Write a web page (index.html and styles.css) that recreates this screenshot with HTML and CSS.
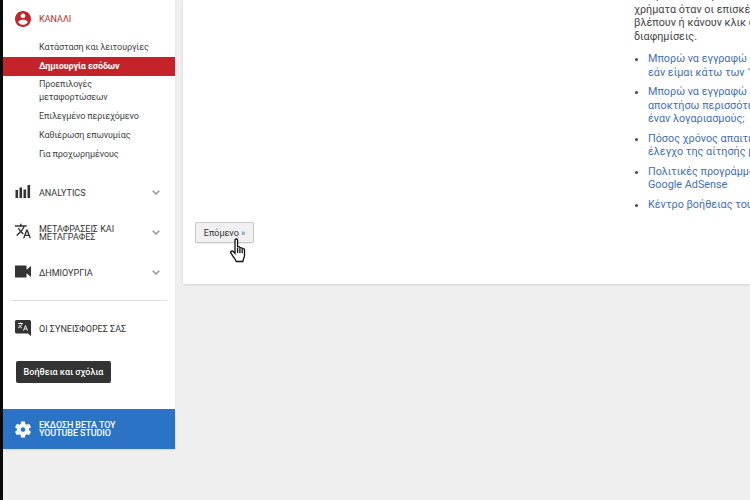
FILE: index.html
```html
<!DOCTYPE html>
<html lang="el">
<head>
  <meta charset="UTF-8">
  <title>Δημιουργία εσόδων</title>
  <link rel="stylesheet" href="styles.css">
</head>
<body>
  <div class="page">
    <nav class="sidebar">
      <div class="nav-row channel">
        <svg class="nav-icon icon-channel" viewBox="2 2 20 20"><path d="M12 2C6.48 2 2 6.48 2 12s4.48 10 10 10 10-4.48 10-10S17.52 2 12 2zm0 3c1.66 0 3 1.34 3 3s-1.34 3-3 3-3-1.34-3-3 1.34-3 3-3zm0 14.2c-2.5 0-4.71-1.28-6-3.22.03-1.99 4-3.08 6-3.08 1.99 0 5.97 1.09 6 3.08-1.29 1.94-3.5 3.22-6 3.22z"/></svg>
        <span class="nav-label">ΚΑΝΑΛΙ</span>
      </div>
      <ul class="subnav">
        <li>Κατάσταση και λειτουργίες</li>
        <li class="active">Δημιουργία εσόδων</li>
        <li class="two-line">Προεπιλογές<br>μεταφορτώσεων</li>
        <li>Επιλεγμένο περιεχόμενο</li>
        <li>Καθιέρωση επωνυμίας</li>
        <li>Για προχωρημένους</li>
      </ul>

      <div class="nav-row section">
        <svg class="nav-icon" viewBox="0 0 15 13"><path d="M0 5h2.6v8H0zM4 2.5h2.6V13H4zM8 4.500h2.600V13H8zM12 0h2.600v13H12z"/></svg>
        <span class="nav-label">ANALYTICS</span>
        <svg class="chevron" viewBox="0 0 8 5"><path d="M.7.7L4 4l3.300-3.300"/></svg>
      </div>
      <div class="nav-row section">
        <svg class="nav-icon icon-translate" viewBox="1 2 22 20"><path d="M12.87 15.07l-2.54-2.51.03-.03c1.74-1.94 2.98-4.17 3.71-6.53H17V4h-7V2H8v2H1v1.99h11.17C11.5 7.92 10.44 9.75 9 11.35 8.07 10.32 7.3 9.19 6.69 8h-2c.73 1.63 1.73 3.17 2.98 4.56l-5.09 5.02L4 19l5-5 3.11 3.11.76-2.04zM18.5 10h-2L12 22h2l1.12-3h4.75L21 22h2l-4.5-12zm-2.62 7l1.62-4.33L19.12 17h-3.24z"/></svg>
        <span class="nav-label tight">ΜΕΤΑΦΡΑΣΕΙΣ ΚΑΙ<br>ΜΕΤΑΓΡΑΦΕΣ</span>
        <svg class="chevron" viewBox="0 0 8 5"><path d="M.7.7L4 4l3.300-3.300"/></svg>
      </div>
      <div class="nav-row section">
        <svg class="nav-icon" viewBox="0 0 16 12"><path d="M0 0h11.500v4.300L16 .5v11l-4.500-3.800V12H0z"/></svg>
        <span class="nav-label">ΔΗΜΙΟΥΡΓΙΑ</span>
        <svg class="chevron" viewBox="0 0 8 5"><path d="M.7.7L4 4l3.300-3.300"/></svg>
      </div>

      <hr class="divider">

      <div class="nav-row section">
        <svg class="nav-icon icon-contrib" viewBox="0 0 16 16">
          <path d="M1.500 0h13A1.500 1.500 0 0 1 16 1.500v14.500l-3-2.500H1.500A1.500 1.500 0 0 1 0 12V1.500A1.500 1.500 0 0 1 1.500 0z"/>
          <path class="contrib-glyph" d="M3 3.500h5M5.500 2.500v1M7 3.500c-.5 2-2 3.500-4 4.500M4 5c.6 1.200 1.500 2.200 3 3M8.500 10.500l2-5 2 5M9.300 9h2.400"/>
        </svg>
        <span class="nav-label">ΟΙ ΣΥΝΕΙΣΦΟΡΕΣ ΣΑΣ</span>
      </div>

      <button class="help-btn">Βοήθεια και σχόλια</button>

      <div class="beta">
        <svg class="beta-icon" viewBox="2.500 2 19 20"><path d="M19.140 12.940c.04-.3.06-.61.06-.94 0-.32-.02-.64-.07-.94l2.030-1.580c.18-.14.23-.41.12-.61l-1.920-3.320c-.12-.22-.37-.29-.59-.22l-2.390.96c-.5-.38-1.030-.7-1.620-.94l-.36-2.540c-.04-.24-.24-.41-.48-.41h-3.840c-.24 0-.43.17-.47.41l-.36 2.540c-.59.24-1.130.57-1.620.94l-2.390-.96c-.22-.08-.47 0-.59.22L2.740 8.870c-.12.21-.08.47.12.61l2.030 1.580c-.05.3-.09.63-.09.94s.02.64.07.94l-2.030 1.580c-.18.14-.23.41-.12.61l1.920 3.320c.12.22.37.29.59.22l2.390-.96c.5.38 1.030.7 1.620.94l.36 2.540c.05.24.24.41.48.41h3.840c.24 0 .44-.17.47-.41l.36-2.540c.59-.24 1.130-.56 1.620-.94l2.390.96c.22.08.47 0 .59-.22l1.920-3.320c.12-.22.07-.47-.12-.61l-2.010-1.580zM12 14.800c-1.540 0-2.800-1.260-2.800-2.800s1.260-2.800 2.800-2.800 2.800 1.260 2.800 2.800-1.260 2.800-2.800 2.800z"/></svg>
        <span class="beta-label">ΕΚΔΟΣΗ ΒΕΤΑ ΤΟΥ<br>YOUTUBE STUDIO</span>
      </div>
    </nav>

    <main class="content">
      <section class="card">
        <div class="help-text">
          <p>Μπορείτε να κερδίσετε χρήματα από τα</p>
          <p>χρήματα όταν οι επισκέπτες του καναλιού</p>
          <p>βλέπουν ή κάνουν κλικ στις</p>
          <p class="last">διαφημίσεις.</p>
          <ul class="help-links">
            <li>Μπορώ να εγγραφώ στο πρόγραμμα<br>εάν είμαι κάτω των 18 ετών;</li>
            <li>Μπορώ να εγγραφώ γρήγορα και να<br>αποκτήσω περισσότερα από<br>έναν λογαριασμούς;</li>
            <li>Πόσος χρόνος απαιτείται για τον<br>έλεγχο της αίτησής μου;</li>
            <li>Πολιτικές προγράμματος του<br>Google AdSense</li>
            <li>Κέντρο βοήθειας του AdSense</li>
          </ul>
        </div>
        <button class="next-btn">Επόμενο <span class="next-arrows">»</span></button>
        <svg class="hand-cursor" viewBox="0 0 18 25">
          <path d="M5 2.200c0-1.600 2.600-1.600 2.600 0v7.300c0-1.300 2.300-1.300 2.300 0v1c0-1.300 2.300-1.300 2.300 0v1c0-1.200 2.300-1.200 2.300.2v5.600c0 2.500-1.200 3.200-1.600 6.200H6.200c-.5-2-1.500-3-2.700-4.500L1 15.200c-1-1.300.8-3 2.300-1.700L5 15.300z"/>
          <path class="hand-lines" d="M7.600 10v5M9.900 10.500v4.500M12.200 11.500v3.500"/>
        </svg>
      </section>
    </main>
  </div>
</body>
</html>
```

FILE: styles.css
```css
* {
  box-sizing: border-box;
}
html, body {
  margin: 0;
  height: 100%;
  overflow: hidden;
}
body {
  font-family: Roboto, "Noto Sans", sans-serif;
  font-size: 9px;
  background-color: #efefef;
  color: #333333;
}
.page {
  display: flex;
  align-items: flex-start;
  height: 500px;
  border-left: 3px solid #0a0a0a;
}

/* sidebar */
.sidebar {
  width: 172px;
  flex: none;
  padding-top: 9px;
  background-color: #ffffff;
  box-shadow: 0 1px 2px rgba(0, 0, 0, 0.1);
}
.nav-row {
  display: flex;
  align-items: center;
  padding: 0 15px 0 12px;
}
.channel {
  height: 20px;
  margin-bottom: 9px;
  color: #c5232a;
}
.section {
  height: 40px;
}
.section .nav-label {
  padding-top: 2px;
}
.nav-icon {
  width: 16px;
  height: 13px;
  margin-top: -2px;
  margin-right: 8px;
  flex: none;
  fill: #333333;
}
.icon-channel {
  height: 16px;
  margin-top: 0;
  fill: #c5232a;
}
.icon-translate {
  height: 16px;
}
.icon-contrib {
  height: 16px;
  margin-top: 0;
}
.contrib-glyph {
  fill: none;
  stroke: #ffffff;
  stroke-width: 0.9;
}
.nav-label {
  flex: 1;
  line-height: 13px;
}
.nav-label.tight {
  line-height: 8px;
}
.chevron {
  width: 8px;
  height: 5px;
  fill: none;
  stroke: #999999;
  stroke-width: 1.6;
}
.subnav {
  list-style: none;
  margin: 0 0 8px;
  padding: 0;
  letter-spacing: -0.1px;
}
.subnav li {
  height: 19px;
  padding-left: 36px;
  line-height: 19px;
  color: #444444;
}
.subnav li.active {
  background-color: #c5232a;
  color: #ffffff;
  font-weight: 700;
}
.subnav li.two-line {
  height: 31px;
  padding-top: 2px;
  line-height: 13px;
}
.divider {
  height: 1px;
  margin: 8px 8px 7px;
  border: none;
  background-color: #e0e0e0;
}
.help-btn {
  display: block;
  width: 95px;
  height: 22px;
  margin: 13px 0 0 13px;
  padding: 0;
  border: none;
  border-radius: 2px;
  background-color: #333333;
  color: #ffffff;
  font: 500 9px Roboto, sans-serif;
}
.beta {
  display: flex;
  align-items: center;
  height: 40px;
  margin-top: 26px;
  padding-left: 12px;
  background-color: #2b73c4;
  color: #ffffff;
}
.beta-icon {
  width: 16px;
  height: 17px;
  margin-right: 8px;
  fill: #ffffff;
}
.beta-label {
  font-weight: 500;
  line-height: 8px;
  letter-spacing: -0.1px;
}

/* main card */
.content {
  flex: 1;
  min-width: 0;
  padding-left: 8px;
}
.card {
  position: relative;
  height: 284px;
  padding: 0 0 0 12px;
  overflow: hidden;
  background-color: #ffffff;
  box-shadow: 0 1px 2px rgba(0, 0, 0, 0.12);
}
.help-text {
  height: 233px;
  margin: -11px 0 0 439px;
  white-space: nowrap;
  font-size: 10.8px;
  line-height: 13.5px;
  color: #444444;
}
.help-text p {
  margin: 0;
}
.help-links {
  margin: 9px 0 0;
  padding-left: 14px;
  color: #3f6fb5;
}
.help-links li {
  margin-bottom: 6px;
}
.help-links li::marker {
  color: #444444;
}
.next-btn {
  display: block;
  width: 59px;
  height: 21px;
  padding: 0;
  border: 1px solid #c8c8c8;
  border-radius: 2px;
  background-color: #f0f0f0;
  box-shadow: 0 1px 1px rgba(0, 0, 0, 0.08);
  color: #333333;
  font: 9px Roboto, sans-serif;
}
.next-arrows {
  color: #3f6fb5;
}
.hand-cursor {
  position: absolute;
  left: 47px;
  top: 238px;
  width: 18px;
  height: 25px;
  fill: #ffffff;
  stroke: #111111;
  stroke-width: 1.3;
}
.hand-lines {
  fill: none;
}
```
